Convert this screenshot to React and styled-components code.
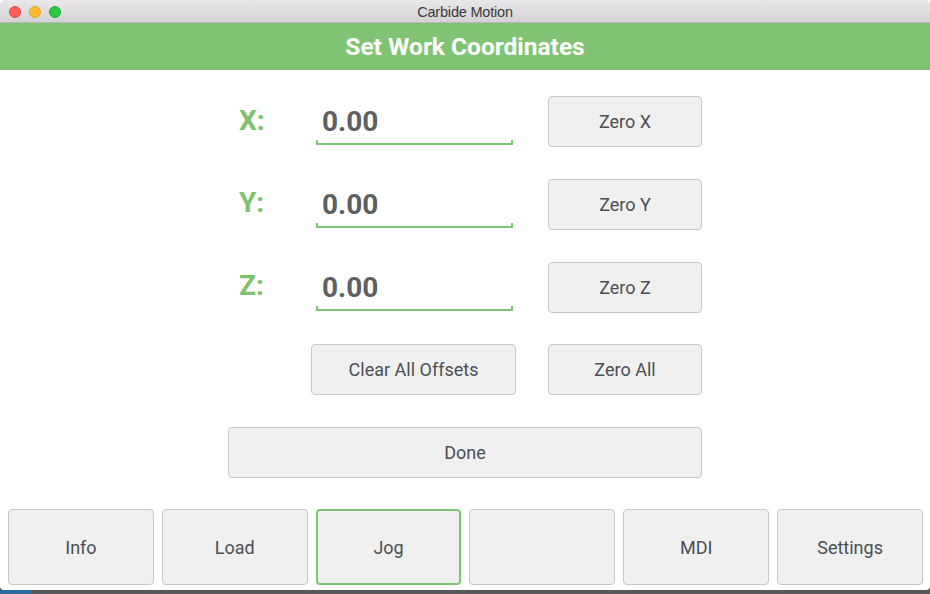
import styled, { createGlobalStyle } from 'styled-components'

const GlobalStyle = createGlobalStyle`
    html, body {
        margin: 0;
        padding: 0;
        background: #4b4d50;
        overflow: hidden;
    }
    * {
        box-sizing: border-box;
    }
`

const axes = ['X', 'Y', 'Z']
const tabs = [
    { label: 'Info' },
    { label: 'Load' },
    { label: 'Jog', active: true },
    { label: '' },
    { label: 'MDI' },
    { label: 'Settings' },
]

export default function App() {
    return (
        <>
            <GlobalStyle />
            <Window>
                <TitleBar>
                    <Lights>
                        <Light $color="#fc5f57" $edge="#de4a43" />
                        <Light $color="#fdbc2e" $edge="#dea123" />
                        <Light $color="#2ac840" $edge="#1ea933" />
                    </Lights>
                    <Title>Carbide Motion</Title>
                </TitleBar>
                <Header>Set Work Coordinates</Header>
                <Body>
                    <Grid>
                        {axes.map((axis) => (
                            <Row key={axis}>
                                <AxisLabel>{axis}:</AxisLabel>
                                <Field>
                                    <Value>0.00</Value>
                                    <Underline />
                                </Field>
                                <Button>Zero {axis}</Button>
                            </Row>
                        ))}
                        <Row>
                            <span />
                            <Button>Clear All Offsets</Button>
                            <Button>Zero All</Button>
                        </Row>
                        <Button>Done</Button>
                    </Grid>
                </Body>
                <Nav>
                    {tabs.map((tab, i) => (
                        <NavButton key={i} $active={tab.active}>{tab.label}</NavButton>
                    ))}
                </Nav>
            </Window>
            <Desktop />
        </>
    )
}

const Window = styled.div`
    width: 930px;
    height: 590px;
    background: #ffffff;
    display: flex;
    flex-direction: column;
    font-family: Roboto, "Liberation Sans", sans-serif;
    border-bottom-left-radius: 4px;
    border-bottom-right-radius: 4px;
    overflow: hidden;
`

const TitleBar = styled.div`
    height: 23px;
    flex: none;
    display: flex;
    align-items: center;
    justify-content: center;
    position: relative;
    padding-top: 1px;
    background: linear-gradient(#e9e7e9, #d4d2d4);
    border-bottom: 1px solid #b9b7b9;
    border-top-left-radius: 5px;
    border-top-right-radius: 5px;
`

const Lights = styled.div`
    position: absolute;
    left: 9px;
    top: 6px;
    display: flex;
    gap: 8px;
`

const Light = styled.span`
    width: 12px;
    height: 12px;
    border-radius: 50%;
    background: ${(p) => p.$color};
    border: 0.5px solid ${(p) => p.$edge};
`

const Title = styled.div`
    font-family: "Liberation Sans", Arial, sans-serif;
    font-size: 14.5px;
    color: #3b3b3b;
    letter-spacing: -0.2px;
`

const Header = styled.div`
    height: 47px;
    flex: none;
    display: flex;
    align-items: center;
    justify-content: center;
    background: #80c473;
    color: #ffffff;
    font-size: 24.5px;
    font-weight: 700;
`

const Body = styled.div`
    padding-top: 26px;
    padding-left: 228px;
    display: flex;
`

const Grid = styled.div`
    display: grid;
    grid-auto-rows: 51px;
    row-gap: 31.75px;
    width: 474px;
`

const Row = styled.div`
    display: grid;
    grid-template-columns: 51px 205px 154px;
    column-gap: 32px;
`

const AxisLabel = styled.div`
    display: flex;
    align-items: center;
    padding-left: 11px;
    padding-bottom: 3px;
    color: #7cc26f;
    font-size: 28px;
    font-weight: 700;
    white-space: nowrap;
`

const Field = styled.div`
    display: flex;
    flex-direction: column;
    justify-content: flex-end;
    padding: 0 3px 2px 5px;
`

const Value = styled.div`
    font-size: 28px;
    font-weight: 700;
    line-height: 32px;
    color: #5f5f5f;
    padding-left: 6px;
    margin-bottom: 2px;
`

const Underline = styled.div`
    height: 5px;
    border: 2px solid #7cc673;
    border-top: none;
`

const Button = styled.div`
    display: flex;
    align-items: center;
    justify-content: center;
    background: #f0f0f0;
    border: 1px solid #c7c7c7;
    border-radius: 4px;
    font-size: 18px;
    color: #4b4f55;
`

const Nav = styled.div`
    margin-top: 31px;
    padding: 0 7px 0 8px;
    display: grid;
    grid-template-columns: repeat(6, 1fr);
    column-gap: 8px;
    height: 76px;
`

const NavButton = styled.div`
    display: flex;
    align-items: center;
    justify-content: center;
    background: #f0f0f0;
    border: ${(p) => (p.$active ? '2px solid #7cc673' : '1px solid #c7c7c7')};
    border-radius: 4px;
    font-size: 18px;
    color: #4b4f55;
`

const Desktop = styled.div`
    height: 4px;
    background: linear-gradient(90deg, #2a6aa0 0 32px, #55575a 32px);
`
